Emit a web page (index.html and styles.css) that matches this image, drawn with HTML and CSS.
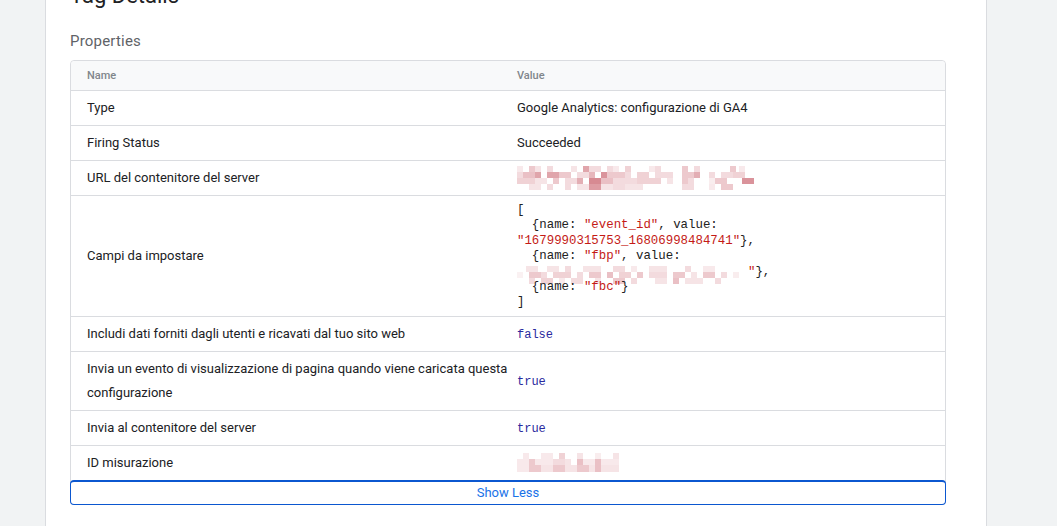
FILE: index.html
```html
<!DOCTYPE html>
<html lang="it">
<head>
<meta charset="utf-8">
<title>Tag Details</title>
<link rel="stylesheet" href="styles.css">
</head>
<body>
<div class="page">
  <div class="card">
    <h1 class="title">Tag Details</h1>
    <h2 class="section">Properties</h2>
    <div class="table">
      <div class="row head">
        <div class="cell">Name</div>
        <div class="cell">Value</div>
      </div>
      <div class="row">
        <div class="cell">Type</div>
        <div class="cell">Google Analytics: configurazione di GA4</div>
      </div>
      <div class="row">
        <div class="cell">Firing Status</div>
        <div class="cell">Succeeded</div>
      </div>
      <div class="row">
        <div class="cell">URL del contenitore del server</div>
        <div class="cell">
          <svg class="redact" width="240" height="24" viewBox="0 0 240 24">
            <g fill="#c24b58">
              <rect x="0" y="0" width="6" height="6" opacity=".12"/><rect x="12" y="0" width="6" height="6" opacity=".3"/><rect x="18" y="0" width="6" height="6" opacity=".15"/><rect x="30" y="0" width="6" height="6" opacity=".2"/><rect x="54" y="0" width="6" height="6" opacity=".15"/><rect x="66" y="0" width="6" height="6" opacity=".5"/><rect x="72" y="0" width="12" height="6" opacity=".2"/><rect x="90" y="0" width="6" height="6" opacity=".2"/><rect x="96" y="0" width="6" height="6" opacity=".12"/><rect x="108" y="0" width="6" height="6" opacity=".25"/><rect x="132" y="0" width="6" height="6" opacity=".12"/><rect x="138" y="0" width="6" height="6" opacity=".2"/><rect x="165" y="0" width="6" height="6" opacity=".3"/><rect x="177" y="0" width="6" height="6" opacity=".2"/><rect x="213" y="0" width="6" height="6" opacity=".3"/><rect x="222" y="0" width="6" height="6" opacity=".12"/>
              <rect x="0" y="6" width="6" height="6" opacity=".2"/><rect x="6" y="6" width="12" height="6" opacity=".35"/><rect x="18" y="6" width="6" height="6" opacity=".5"/><rect x="30" y="6" width="12" height="6" opacity=".5"/><rect x="42" y="6" width="12" height="6" opacity=".3"/><rect x="60" y="6" width="12" height="6" opacity=".2"/><rect x="72" y="6" width="6" height="6" opacity=".4"/><rect x="84" y="6" width="6" height="6" opacity=".6"/><rect x="90" y="6" width="18" height="6" opacity=".3"/><rect x="108" y="6" width="6" height="6" opacity=".2"/><rect x="120" y="6" width="12" height="6" opacity=".25"/><rect x="138" y="6" width="18" height="6" opacity=".2"/><rect x="165" y="6" width="12" height="6" opacity=".3"/><rect x="177" y="6" width="6" height="6" opacity=".45"/><rect x="192" y="6" width="6" height="6" opacity=".2"/><rect x="204" y="6" width="12" height="6" opacity=".2"/><rect x="216" y="6" width="12" height="6" opacity=".25"/>
              <rect x="0" y="12" width="18" height="6" opacity=".25"/><rect x="18" y="12" width="12" height="6" opacity=".15"/><rect x="36" y="12" width="6" height="6" opacity=".3"/><rect x="48" y="12" width="12" height="6" opacity=".2"/><rect x="60" y="12" width="6" height="6" opacity=".45"/><rect x="72" y="12" width="12" height="6" opacity=".65"/><rect x="84" y="12" width="12" height="6" opacity=".35"/><rect x="96" y="12" width="24" height="6" opacity=".2"/><rect x="120" y="12" width="24" height="6" opacity=".25"/><rect x="150" y="12" width="6" height="6" opacity=".15"/><rect x="165" y="12" width="6" height="6" opacity=".3"/><rect x="171" y="12" width="6" height="6" opacity=".2"/><rect x="192" y="12" width="6" height="6" opacity=".1"/><rect x="198" y="12" width="12" height="6" opacity=".3"/><rect x="225" y="12" width="12" height="6" opacity=".6"/>
              <rect x="12" y="18" width="12" height="6" opacity=".15"/><rect x="30" y="18" width="6" height="6" opacity=".2"/><rect x="48" y="18" width="6" height="6" opacity=".2"/><rect x="60" y="18" width="12" height="6" opacity=".15"/><rect x="72" y="18" width="12" height="6" opacity=".55"/><rect x="84" y="18" width="12" height="6" opacity=".15"/><rect x="96" y="18" width="12" height="6" opacity=".2"/><rect x="108" y="18" width="18" height="6" opacity=".15"/><rect x="165" y="18" width="12" height="6" opacity=".2"/><rect x="192" y="18" width="6" height="6" opacity=".12"/><rect x="204" y="18" width="12" height="6" opacity=".3"/>
            </g>
          </svg>
        </div>
      </div>
      <div class="row">
        <div class="cell">Campi da impostare</div>
        <div class="cell"><pre class="code">[
  {name: <span class="s">"event_id"</span>, value:
<span class="s">"1679990315753_16806998484741"</span>},
  {name: <span class="s">"fbp"</span>, value:
<svg class="redact-inline" width="231" height="18" viewBox="0 0 231 18"><g fill="#c24b58"><rect x="0" y="6" width="6" height="6" opacity=".08"/><rect x="9" y="0" width="12" height="6" opacity=".15"/><rect x="30" y="0" width="12" height="6" opacity=".15"/><rect x="48" y="0" width="6" height="6" opacity=".2"/><rect x="66" y="0" width="18" height="6" opacity=".15"/><rect x="96" y="0" width="12" height="6" opacity=".2"/><rect x="114" y="0" width="6" height="6" opacity=".12"/><rect x="132" y="0" width="18" height="6" opacity=".15"/><rect x="168" y="0" width="6" height="6" opacity=".2"/><rect x="186" y="0" width="12" height="6" opacity=".12"/>
<rect x="12" y="6" width="12" height="6" opacity=".3"/><rect x="24" y="6" width="6" height="6" opacity=".2"/><rect x="36" y="6" width="18" height="6" opacity=".25"/><rect x="60" y="6" width="6" height="6" opacity=".2"/><rect x="72" y="6" width="12" height="6" opacity=".3"/><rect x="90" y="6" width="6" height="6" opacity=".35"/><rect x="102" y="6" width="12" height="6" opacity=".25"/><rect x="120" y="6" width="6" height="6" opacity=".3"/><rect x="132" y="6" width="18" height="6" opacity=".2"/><rect x="156" y="6" width="12" height="6" opacity=".3"/><rect x="174" y="6" width="6" height="6" opacity=".15"/><rect x="186" y="6" width="12" height="6" opacity=".3"/><rect x="204" y="6" width="6" height="6" opacity=".2"/><rect x="216" y="6" width="6" height="6" opacity=".1"/>
<rect x="12" y="12" width="6" height="6" opacity=".2"/><rect x="24" y="12" width="12" height="6" opacity=".25"/><rect x="42" y="12" width="6" height="6" opacity=".12"/><rect x="54" y="12" width="12" height="6" opacity=".2"/><rect x="78" y="12" width="6" height="6" opacity=".15"/><rect x="96" y="12" width="12" height="6" opacity=".3"/><rect x="114" y="12" width="6" height="6" opacity=".2"/><rect x="138" y="12" width="12" height="6" opacity=".15"/><rect x="156" y="12" width="6" height="6" opacity=".35"/><rect x="168" y="12" width="18" height="6" opacity=".15"/><rect x="198" y="12" width="6" height="6" opacity=".2"/></g></svg><span class="s">"</span>},
  {name: <span class="s">"fbc"</span>}
]</pre></div>
      </div>
      <div class="row">
        <div class="cell">Includi dati forniti dagli utenti e ricavati dal tuo sito web</div>
        <div class="cell"><span class="bool">false</span></div>
      </div>
      <div class="row">
        <div class="cell">Invia un evento di visualizzazione di pagina quando viene caricata questa configurazione</div>
        <div class="cell"><span class="bool">true</span></div>
      </div>
      <div class="row">
        <div class="cell">Invia al contenitore del server</div>
        <div class="cell"><span class="bool">true</span></div>
      </div>
      <div class="row last">
        <div class="cell">ID misurazione</div>
        <div class="cell">
          <svg class="redact" width="104" height="20" viewBox="0 0 104 20">
            <g fill="#c24b58">
              <rect x="6" y="0" width="6" height="6" opacity=".12"/><rect x="24" y="0" width="12" height="6" opacity=".12"/><rect x="42" y="0" width="6" height="6" opacity=".25"/><rect x="60" y="0" width="6" height="6" opacity=".15"/><rect x="78" y="0" width="6" height="6" opacity=".1"/><rect x="96" y="0" width="6" height="6" opacity=".15"/>
              <rect x="0" y="6" width="12" height="6" opacity=".12"/><rect x="12" y="6" width="6" height="6" opacity=".3"/><rect x="18" y="6" width="18" height="6" opacity=".12"/><rect x="36" y="6" width="12" height="6" opacity=".2"/><rect x="48" y="6" width="6" height="6" opacity=".15"/><rect x="60" y="6" width="6" height="6" opacity=".35"/><rect x="66" y="6" width="12" height="6" opacity=".12"/><rect x="78" y="6" width="6" height="6" opacity=".35"/><rect x="84" y="6" width="18" height="6" opacity=".12"/>
              <rect x="0" y="12" width="12" height="7" opacity=".12"/><rect x="12" y="12" width="12" height="7" opacity=".3"/><rect x="24" y="12" width="12" height="7" opacity=".15"/><rect x="36" y="12" width="12" height="7" opacity=".3"/><rect x="48" y="12" width="12" height="7" opacity=".15"/><rect x="60" y="12" width="12" height="7" opacity=".3"/><rect x="72" y="12" width="6" height="7" opacity=".15"/><rect x="78" y="12" width="6" height="7" opacity=".35"/><rect x="84" y="12" width="18" height="7" opacity=".15"/>
            </g>
          </svg>
        </div>
      </div>
      <button class="toggle" type="button">Show Less</button>
    </div>
  </div>
</div>
</body>
</html>
```
FILE: styles.css
```css
html, body {
  margin: 0;
  padding: 0;
  background: #f1f3f4;
  height: 100%;
  overflow: hidden;
}
body {
  font-family: Roboto, "Liberation Sans", Arial, sans-serif;
  color: #202124;
}
.page {
  display: flex;
  padding-left: 45px;
}
.card {
  width: 876px;
  min-height: 560px;
  background: #fff;
  border-left: 1px solid #dadce0;
  border-right: 1px solid #dadce0;
  padding: 0 40px 0 24px;
  display: flex;
  flex-direction: column;
}
.title {
  margin: -18px 0 0;
  font-size: 22px;
  line-height: 28px;
  font-weight: 400;
  color: #202124;
}
.section {
  margin: 21px 0 9px;
  font-size: 15px;
  line-height: 20px;
  font-weight: 400;
  color: #5f6368;
  letter-spacing: 0.2px;
}
.table {
  border: 1px solid #dadce0;
  border-radius: 4px;
  display: flex;
  flex-direction: column;
}
.row {
  display: grid;
  grid-template-columns: 446px 1fr;
  align-items: center;
  border-bottom: 1px solid #dadce0;
}
.row.last {
  border-bottom: none;
}
.cell {
  padding: 5px 16px 5px 0;
  font-size: 13px;
  line-height: 24px;
  min-width: 0;
}
.cell:first-child {
  padding: 5px 4px 5px 16px;
}
.row.head {
  background: #f8f9fa;
  border-radius: 4px 4px 0 0;
  height: 29px;
}
.row.head .cell {
  font-size: 11px;
  font-weight: 500;
  line-height: 16px;
  color: #80868b;
  padding-top: 6px;
  padding-bottom: 6px;
}
.redact {
  display: block;
}
.code {
  margin: 0;
  padding-top: 2px;
  font-family: "Liberation Mono", "Courier New", monospace;
  font-size: 12.4px;
  line-height: 15.4px;
  color: #222;
  white-space: pre;
}
.s {
  color: #c41a16;
}
.redact-inline {
  display: inline-block;
  vertical-align: -5px;
  margin: -4px 0;
}
.bool {
  font-family: "Liberation Mono", "Courier New", monospace;
  font-size: 12px;
  line-height: 1;
  color: #2a2a9e;
}
.toggle {
  margin: 0 -1px -1px;
  height: 25px;
  background: #fff;
  border: 1px solid #0b57d0;
  border-top-width: 2px;
  border-radius: 4px;
  font-family: Roboto, "Liberation Sans", Arial, sans-serif;
  font-size: 13px;
  color: #1a73e8;
  padding: 0;
  cursor: pointer;
}
```
